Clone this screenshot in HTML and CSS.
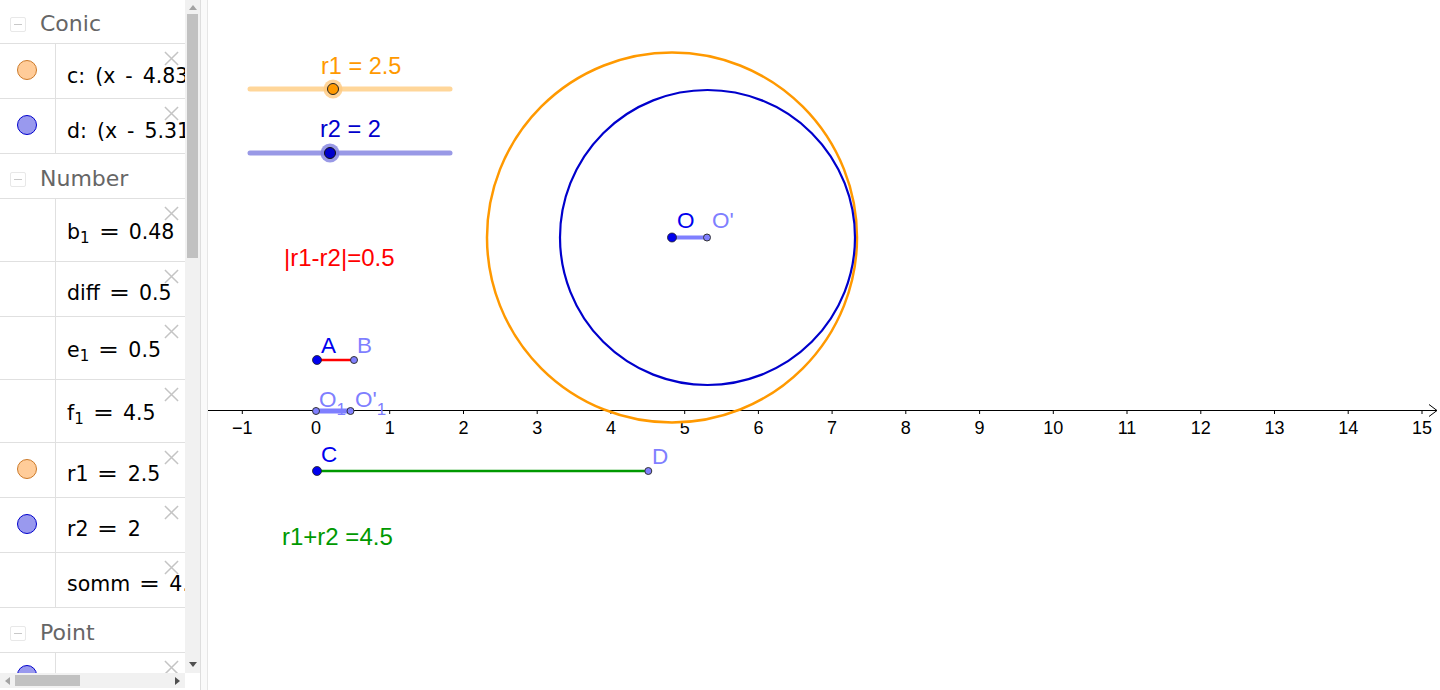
FILE: index.html
```html
<!DOCTYPE html>
<html>
<head>
<meta charset="utf-8">
<link rel="stylesheet" href="styles.css">
</head>
<body>
<div class="app">
  <div class="algebra">
    <div class="av-main">
      <div class="av-list">
        <div class="header first"><span class="collapse"><span class="minus"></span></span><span class="htitle">Conic</span></div>
        <div class="row"><div class="marker"><span class="dot orange"></span></div><div class="content plain">c: (x - 4.83)² + (y - 2.35)² = 6.25</div><svg class="close" viewBox="0 0 16 16"><path d="M1 1L15 15M15 1L1 15"/></svg></div>
        <div class="row"><div class="marker"><span class="dot blue"></span></div><div class="content plain">d: (x - 5.31)² + (y - 2.35)² = 4</div><svg class="close" viewBox="0 0 16 16"><path d="M1 1L15 15M15 1L1 15"/></svg></div>
        <div class="header"><span class="collapse"><span class="minus"></span></span><span class="htitle">Number</span></div>
        <div class="row tall"><div class="marker"></div><div class="content">b<sub>1</sub><span class="eq">=</span>0.48</div><svg class="close" viewBox="0 0 16 16"><path d="M1 1L15 15M15 1L1 15"/></svg></div>
        <div class="row"><div class="marker"></div><div class="content">diff<span class="eq">=</span>0.5</div><svg class="close" viewBox="0 0 16 16"><path d="M1 1L15 15M15 1L1 15"/></svg></div>
        <div class="row tall"><div class="marker"></div><div class="content">e<sub>1</sub><span class="eq">=</span>0.5</div><svg class="close" viewBox="0 0 16 16"><path d="M1 1L15 15M15 1L1 15"/></svg></div>
        <div class="row tall"><div class="marker"></div><div class="content">f<sub>1</sub><span class="eq">=</span>4.5</div><svg class="close" viewBox="0 0 16 16"><path d="M1 1L15 15M15 1L1 15"/></svg></div>
        <div class="row"><div class="marker"><span class="dot orange"></span></div><div class="content">r1<span class="eq">=</span>2.5</div><svg class="close" viewBox="0 0 16 16"><path d="M1 1L15 15M15 1L1 15"/></svg></div>
        <div class="row"><div class="marker"><span class="dot blue"></span></div><div class="content">r2<span class="eq">=</span>2</div><svg class="close" viewBox="0 0 16 16"><path d="M1 1L15 15M15 1L1 15"/></svg></div>
        <div class="row"><div class="marker"></div><div class="content">somm<span class="eq">=</span>4.5</div><svg class="close" viewBox="0 0 16 16"><path d="M1 1L15 15M15 1L1 15"/></svg></div>
        <div class="header"><span class="collapse"><span class="minus"></span></span><span class="htitle">Point</span></div>
        <div class="row last"><div class="marker"><span class="dot blue"></span></div><div class="content plain">A = (0, 0.67)</div><svg class="close" viewBox="0 0 16 16"><path d="M1 1L15 15M15 1L1 15"/></svg></div>
      </div>
      <div class="vscroll">
        <div class="arrow-up"></div>
        <div class="vthumb"></div>
        <div class="vspace"></div>
        <div class="arrow-down"></div>
      </div>
    </div>
    <div class="hscroll-row">
      <div class="hscroll">
        <div class="arrow-left"></div>
        <div class="hthumb"></div>
        <div class="hspace"></div>
        <div class="arrow-right"></div>
      </div>
      <div class="corner"></div>
    </div>
  </div>
  <div class="splitter"></div>
  <div class="graphics">
    <svg class="canvas" viewBox="208 0 1232 690" width="1232" height="690">
      <!-- sliders -->
      <text class="lbl orange-t" x="321" y="74">r1 = 2.5</text>
      <line x1="250" y1="89" x2="450" y2="89" stroke="#ffd699" stroke-width="5" stroke-linecap="round"/>
      <circle cx="333" cy="89" r="9.5" fill="#ffc980" fill-opacity="0.8"/>
      <circle cx="333" cy="89" r="5.5" fill="#ff9900" stroke="#222" stroke-width="1"/>
      <text class="lbl blue-t" x="320" y="137">r2 = 2</text>
      <line x1="250" y1="153" x2="450" y2="153" stroke="#9999e6" stroke-width="5" stroke-linecap="round"/>
      <circle cx="330" cy="153" r="9.5" fill="#8080e0" fill-opacity="0.8"/>
      <circle cx="330" cy="153" r="5.5" fill="#0000cc" stroke="#111" stroke-width="1"/>

      <!-- texts -->
      <text class="lbl big" x="284" y="266" fill="#ff0000">|r1-r2|=0.5</text>
      <text class="lbl big" x="282" y="545" fill="#009900">r1+r2 =4.5</text>

      <!-- axis -->
      <line x1="208" y1="410.5" x2="1437" y2="410.5" stroke="#000" stroke-width="1"/>
      <path d="M1429 404.5 L1437 410.5 L1429 416.5" fill="none" stroke="#000" stroke-width="1"/>
      <g stroke="#000" stroke-width="1">
        <line x1="242.3" y1="410" x2="242.3" y2="414"/>
        <line x1="316" y1="410" x2="316" y2="414"/>
        <line x1="389.7" y1="410" x2="389.7" y2="414"/>
        <line x1="463.5" y1="410" x2="463.5" y2="414"/>
        <line x1="537.2" y1="410" x2="537.2" y2="414"/>
        <line x1="610.9" y1="410" x2="610.9" y2="414"/>
        <line x1="684.7" y1="410" x2="684.7" y2="414"/>
        <line x1="758.4" y1="410" x2="758.4" y2="414"/>
        <line x1="832.1" y1="410" x2="832.1" y2="414"/>
        <line x1="905.8" y1="410" x2="905.8" y2="414"/>
        <line x1="979.6" y1="410" x2="979.6" y2="414"/>
        <line x1="1053.3" y1="410" x2="1053.3" y2="414"/>
        <line x1="1127" y1="410" x2="1127" y2="414"/>
        <line x1="1200.8" y1="410" x2="1200.8" y2="414"/>
        <line x1="1274.5" y1="410" x2="1274.5" y2="414"/>
        <line x1="1348.2" y1="410" x2="1348.2" y2="414"/>
        <line x1="1422" y1="410" x2="1422" y2="414"/>
      </g>
      <g class="ticklbl">
        <text x="242.3" y="434">−1</text>
        <text x="316" y="434">0</text>
        <text x="389.7" y="434">1</text>
        <text x="463.5" y="434">2</text>
        <text x="537.2" y="434">3</text>
        <text x="610.9" y="434">4</text>
        <text x="684.7" y="434">5</text>
        <text x="758.4" y="434">6</text>
        <text x="832.1" y="434">7</text>
        <text x="905.8" y="434">8</text>
        <text x="979.6" y="434">9</text>
        <text x="1053.3" y="434">10</text>
        <text x="1127" y="434">11</text>
        <text x="1200.8" y="434">12</text>
        <text x="1274.5" y="434">13</text>
        <text x="1348.2" y="434">14</text>
        <text x="1422" y="434">15</text>
      </g>

      <!-- circles -->
      <circle cx="672" cy="237.5" r="185" fill="none" stroke="#ff9900" stroke-width="2.5"/>
      <circle cx="707.5" cy="237.5" r="147.5" fill="none" stroke="#0000cc" stroke-width="2.2"/>

      <!-- O O' -->
      <line x1="672" y1="237.5" x2="707" y2="237.5" stroke="#7f7fff" stroke-width="4"/>
      <circle cx="672" cy="237.5" r="4.5" fill="#0000ee" stroke="#222" stroke-width="0.8"/>
      <circle cx="707" cy="237.5" r="3.5" fill="#7f7fff" stroke="#333" stroke-width="1"/>
      <text class="plbl dark" x="677" y="228">O</text>
      <text class="plbl light" x="712" y="228">O'</text>

      <!-- A B -->
      <line x1="317" y1="360" x2="354" y2="360" stroke="#ff0000" stroke-width="2.5"/>
      <circle cx="317" cy="360" r="4.5" fill="#0000ee" stroke="#222" stroke-width="0.8"/>
      <circle cx="354" cy="360" r="3.5" fill="#7f7fff" stroke="#333" stroke-width="1"/>
      <text class="plbl dark" x="321" y="353">A</text>
      <text class="plbl light" x="357" y="353">B</text>

      <!-- O1 O'1 -->
      <line x1="316" y1="411" x2="350.5" y2="411" stroke="#7f7fff" stroke-width="5"/>
      <circle cx="316" cy="411" r="3.5" fill="#7f7fff" stroke="#333" stroke-width="1"/>
      <circle cx="350.5" cy="411" r="3.5" fill="#7f7fff" stroke="#333" stroke-width="1"/>
      <text class="plbl light" x="319" y="407">O<tspan class="psub" dy="8">1</tspan></text>
      <text class="plbl light" x="355" y="407">O'<tspan class="psub" dy="8">1</tspan></text>

      <!-- C D -->
      <line x1="317" y1="471" x2="648" y2="471" stroke="#009900" stroke-width="2.5"/>
      <circle cx="317" cy="471" r="4.5" fill="#0000ee" stroke="#222" stroke-width="0.8"/>
      <circle cx="648.3" cy="471" r="3.5" fill="#7f7fff" stroke="#333" stroke-width="1"/>
      <text class="plbl dark" x="321" y="462">C</text>
      <text class="plbl light" x="652" y="464">D</text>
    </svg>
  </div>
</div>
</body>
</html>
```
FILE: styles.css
```css
html, body {
  margin: 0;
  padding: 0;
  width: 1440px;
  height: 690px;
  overflow: hidden;
  background: #fff;
  font-family: "DejaVu Sans", sans-serif;
}

.app {
  display: flex;
  width: 1440px;
  height: 690px;
}

.algebra {
  width: 200px;
  display: flex;
  flex-direction: column;
  flex-shrink: 0;
}

.av-main {
  display: flex;
  height: 673px;
}

.av-list {
  width: 185px;
  overflow: hidden;
  background: #fff;
}

.header {
  height: 45px;
  box-sizing: border-box;
  border-bottom: 1px solid #e0e0e0;
  display: flex;
  align-items: center;
  padding-left: 10px;
}

.header.first {
  height: 44px;
}

.collapse {
  width: 14px;
  height: 13px;
  border: 1px solid #e8e8e8;
  border-radius: 2px;
  display: flex;
  align-items: center;
  justify-content: center;
  margin-top: 6px;
}

.minus {
  width: 8px;
  height: 1px;
  background: #c8c8c8;
}

.htitle {
  margin-left: 14px;
  font-size: 22px;
  color: #666;
  margin-top: 4px;
}

.row {
  position: relative;
  height: 55px;
  box-sizing: border-box;
  border-bottom: 1px solid #e0e0e0;
  display: flex;
}

.row.tall {
  height: 63px;
}

.row.last {
  height: 60px;
  border-bottom: none;
}

.marker {
  width: 56px;
  flex-shrink: 0;
  box-sizing: border-box;
  border-right: 1px solid #e0e0e0;
  display: flex;
  align-items: center;
  justify-content: center;
  padding-right: 1px;
}

.row.last .marker {
  align-items: flex-start;
  padding-top: 14px;
}

.dot {
  width: 20px;
  height: 20px;
  border-radius: 50%;
  box-sizing: border-box;
  margin-top: -2px;
}

.dot.orange {
  background: #ffcc99;
  border: 1px solid #cc7a29;
}

.dot.blue {
  background: #9999ee;
  border: 1px solid #0000cc;
}

.content {
  padding-left: 11px;
  font-size: 20.5px;
  color: #000;
  white-space: nowrap;
  overflow: hidden;
  display: flex;
  align-items: center;
  flex: 1;
  margin-top: 7px;
}

.row.tall .content {
  margin-top: 4px;
}

.content.plain {
  word-spacing: 3.5px;
  display: block;
  line-height: 55px;
  margin-top: 5px;
}

.row.last .content {
  line-height: 80px;
}

.content sub {
  font-size: 15px;
  position: relative;
  top: 6px;
  vertical-align: baseline;
}

.eq {
  margin: 0 11px;
  display: inline-block;
  transform: scaleX(1.22);
}

.close {
  position: absolute;
  right: 6px;
  top: 7px;
  width: 15px;
  height: 15px;
  fill: none;
  stroke: #c4c4c4;
  stroke-width: 1.6;
}

.vscroll {
  width: 15px;
  background: #f1f1f1;
  display: flex;
  flex-direction: column;
  align-items: center;
}

.arrow-up {
  width: 0;
  height: 0;
  border-left: 4px solid transparent;
  border-right: 4px solid transparent;
  border-bottom: 5px solid #a3a3a3;
  margin-top: 5px;
  margin-bottom: 4px;
}

.vthumb {
  width: 11px;
  height: 244px;
  background: #c1c1c1;
}

.vspace {
  flex: 1;
}

.arrow-down {
  width: 0;
  height: 0;
  border-left: 4px solid transparent;
  border-right: 4px solid transparent;
  border-top: 5px solid #505050;
  margin-bottom: 6px;
}

.hscroll-row {
  display: flex;
  height: 17px;
}

.hscroll {
  width: 185px;
  height: 15px;
  background: #f1f1f1;
  display: flex;
  align-items: center;
}

.arrow-left {
  width: 0;
  height: 0;
  border-top: 4px solid transparent;
  border-bottom: 4px solid transparent;
  border-right: 5px solid #a3a3a3;
  margin-left: 5px;
  margin-right: 5px;
}

.hthumb {
  width: 65px;
  height: 11px;
  background: #c1c1c1;
}

.hspace {
  flex: 1;
}

.arrow-right {
  width: 0;
  height: 0;
  border-top: 4px solid transparent;
  border-bottom: 4px solid transparent;
  border-left: 5px solid #505050;
  margin-right: 5px;
}

.corner {
  width: 15px;
  background: #fff;
}

.splitter {
  width: 8px;
  flex-shrink: 0;
  box-sizing: border-box;
  background: #fafafa;
  border-left: 1px solid #dedede;
  border-right: 1px solid #e6e6e6;
}

.graphics {
  flex: 1;
  background: #fff;
  overflow: hidden;
}

.canvas {
  display: block;
}

.lbl {
  font-family: "Liberation Sans", Arial, sans-serif;
  font-size: 23.5px;
}

.lbl.big {
  font-size: 24px;
}

.orange-t { fill: #ff9900; }
.blue-t { fill: #0000cc; }

.ticklbl text {
  font-family: "Liberation Sans", Arial, sans-serif;
  font-size: 18px;
  text-anchor: middle;
  fill: #000;
}

.plbl {
  font-family: "Liberation Sans", Arial, sans-serif;
  font-size: 22.5px;
}

.plbl.dark { fill: #0000ee; }
.plbl.light { fill: #7f7fff; }

.psub {
  font-size: 17px;
}
```
